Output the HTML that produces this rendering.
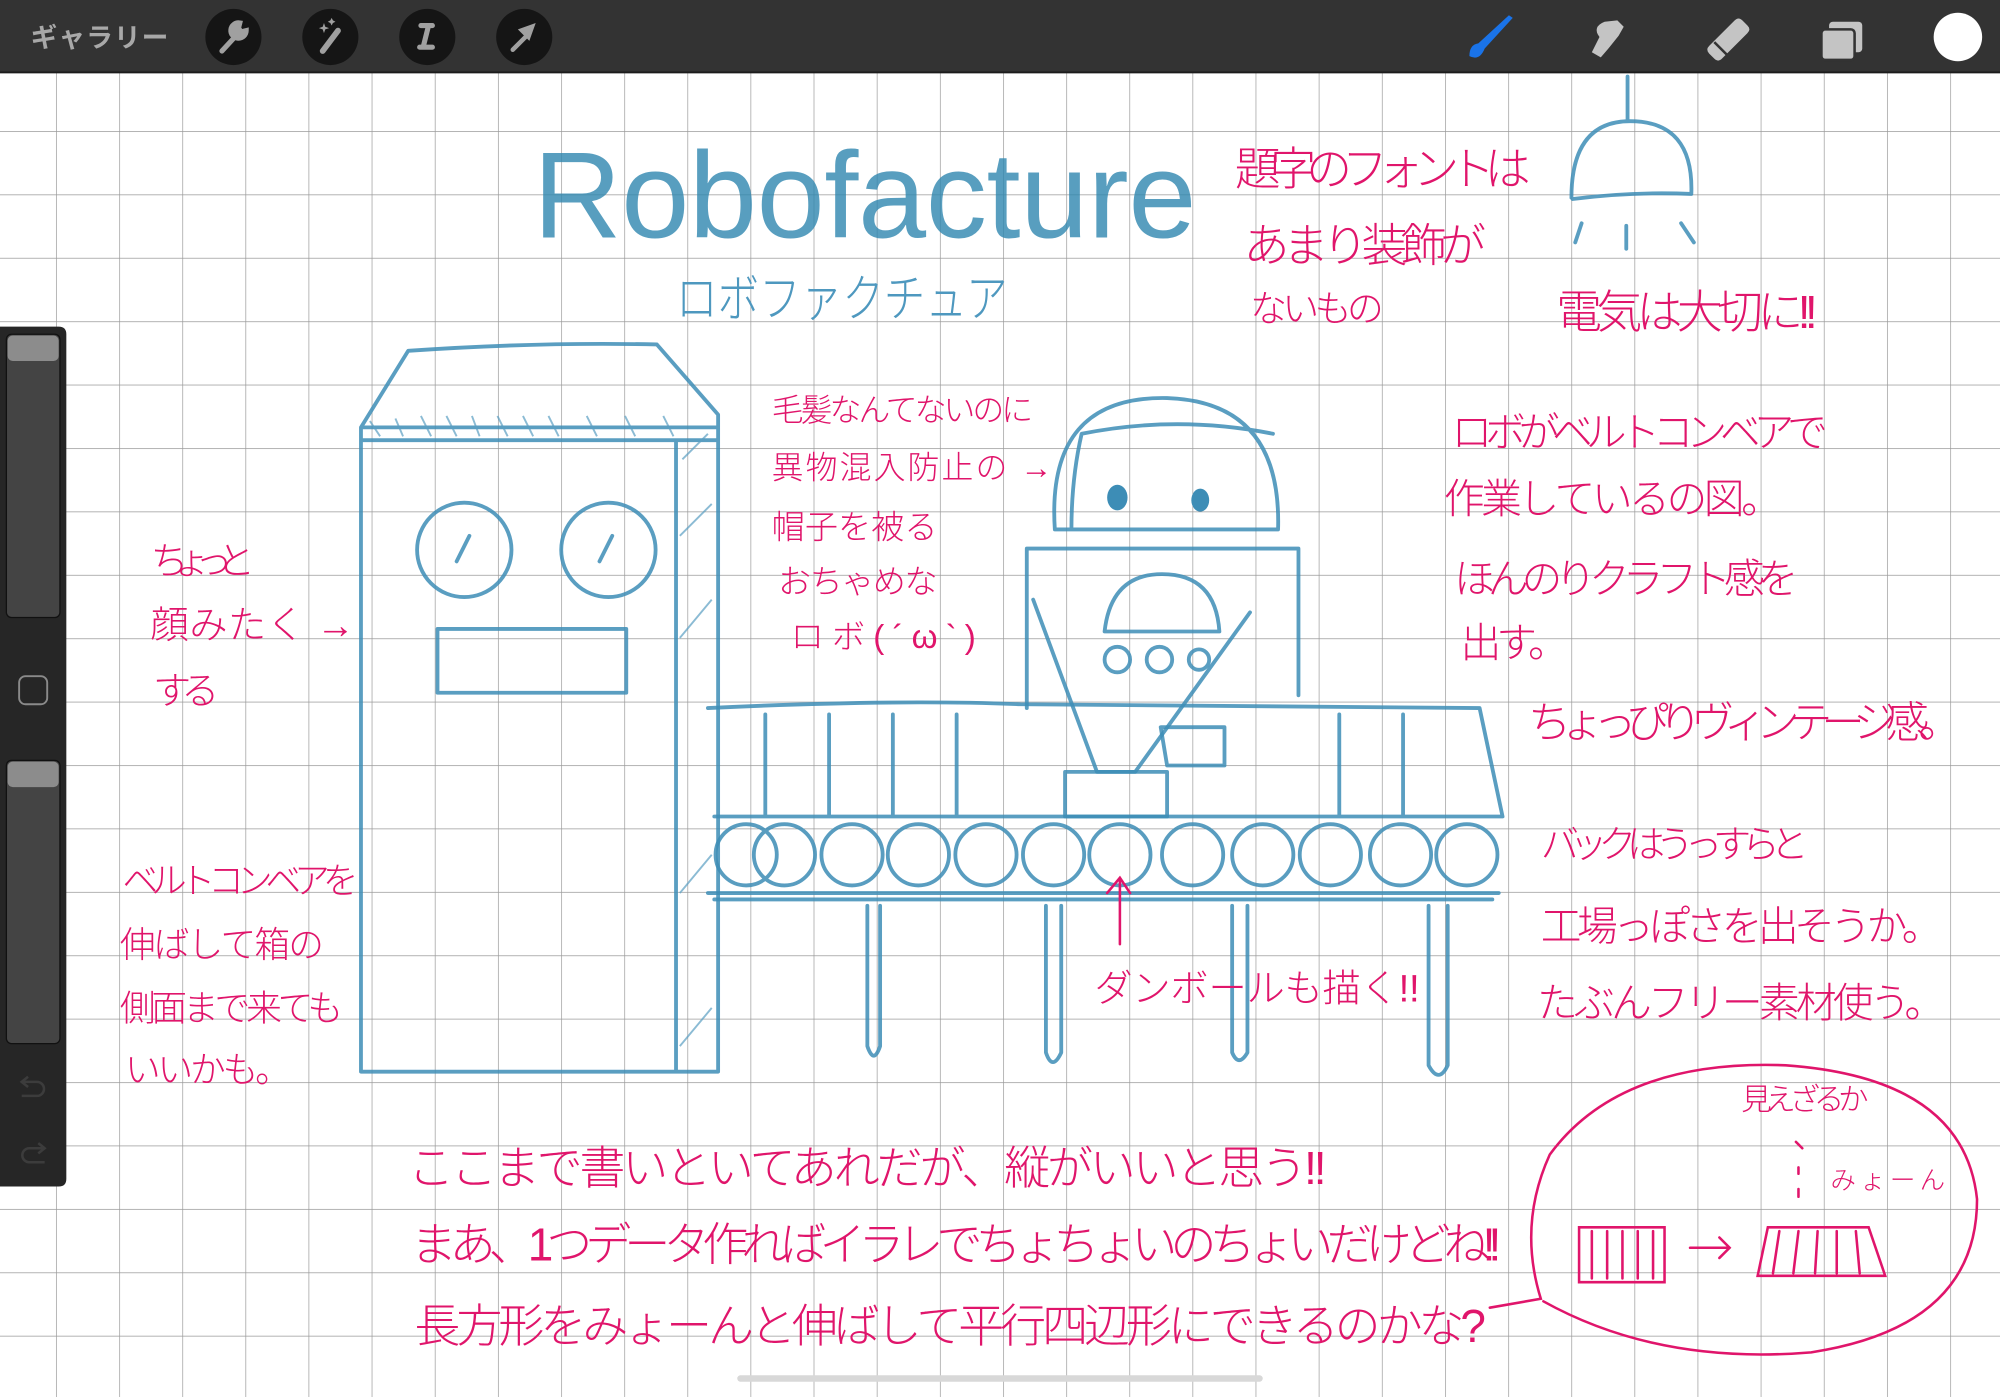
<!DOCTYPE html>
<html><head><meta charset="utf-8"><style>
html,body{margin:0;padding:0;width:2000px;height:1397px;overflow:hidden;background:#fff}
svg{display:block}
.p{fill:#e0156b;font-family:"Liberation Sans","Noto Sans CJK JP",sans-serif;font-weight:200}
.b{fill:none;stroke:#3d8db6;stroke-width:3;stroke-linecap:round;stroke-linejoin:round;opacity:.85}
.bt{fill:none;stroke:#5a9ec2;stroke-width:1.5;opacity:.7}
.pk{fill:none;stroke:#e0156b;stroke-width:2;stroke-linecap:round}
</style></head><body>
<svg width="2000" height="1397" viewBox="0 0 1568 1095" preserveAspectRatio="none" xmlns="http://www.w3.org/2000/svg">
<defs>
<pattern id="g" x="43.9" y="3.3" width="49.5" height="49.7" patternUnits="userSpaceOnUse">
<path d="M0 0V49.7M0 0H49.5" stroke="#9a9a9a" stroke-width="1.1" fill="none"/>
</pattern>
</defs>
<rect width="1568" height="1095" fill="#fff"/>
<rect y="57" width="1568" height="1038" fill="url(#g)"/>

<!-- top bar -->
<rect width="1568" height="57" fill="#333"/>
<rect y="56" width="1568" height="1.5" fill="#1c1c1c"/>
<text x="24" y="37" font-family="'Liberation Sans','Noto Sans CJK JP',sans-serif" font-size="21" font-weight="bold" fill="#a8a8a8" textLength="108">ギャラリー</text>
<circle cx="183" cy="29" r="22" fill="#151515"/>
<circle cx="259" cy="29" r="22" fill="#151515"/>
<circle cx="335" cy="29" r="22" fill="#151515"/>
<circle cx="411" cy="29" r="22" fill="#151515"/>
<path d="M174 40 L186 27 M188 18 a6 6 0 1 0 5 6 l-4 1 -2 -3z" stroke="#a0a0a0" stroke-width="4" fill="#a0a0a0" stroke-linecap="round"/>
<path d="M253 40 L265 24" stroke="#a0a0a0" stroke-width="4.5" stroke-linecap="round"/>
<path d="M254 18l1 3 3 1-3 1-1 3-1-3-3-1 3-1z M260 14l1 2 2 1-2 1-1 2-1-2-2-1 2-1z" fill="#a0a0a0"/>
<path d="M330 20h9 M336 20l-4 16 M329 37h10" stroke="#a0a0a0" stroke-width="4" stroke-linecap="round" fill="none"/>
<path d="M402 39 L414 27" stroke="#a0a0a0" stroke-width="3.5" stroke-linecap="round"/>
<path d="M420 18 L406 23 L415 32z" fill="#a0a0a0"/>
<path d="M1152 44 q8 4 12 -6 l22 -24 -3 -2 -24 22 q-7 1 -7 10z" fill="#1a73e8"/>
<path d="M1248 41 l6 -12 q-6 -8 4 -12 l10 -1 l5 5 -4 7 -8 10 -6 7z" fill="#c4c4c4"/>
<path d="M1340 36 l20 -20 q3 -3 6 0 l4 4 q3 3 0 6 l-20 20 q-3 3 -6 0 l-4 -4 q-3 -3 0 -6z" fill="#c4c4c4"/>
<path d="M1344 33 l10 10" stroke="#333" stroke-width="2"/>
<rect x="1434" y="17" width="26" height="24" rx="3" fill="#c4c4c4"/>
<rect x="1428" y="23" width="26" height="24" rx="3" fill="#c4c4c4" stroke="#333" stroke-width="2"/>
<circle cx="1535" cy="29" r="19" fill="#fff"/>

<!-- sidebar -->
<path d="M0 256 H46 q6 0 6 6 V924 q0 6 -6 6 H0z" fill="#262626"/>
<rect x="5" y="262" width="42" height="222" rx="4" fill="#444" stroke="#111" stroke-width="1"/>
<rect x="6" y="263" width="40" height="20" rx="4" fill="#8c8c8c"/>
<rect x="15" y="530" width="22" height="22" rx="5" fill="none" stroke="#8a8a8a" stroke-width="1.5"/>
<rect x="5" y="596" width="42" height="222" rx="4" fill="#444" stroke="#111" stroke-width="1"/>
<rect x="6" y="597" width="40" height="20" rx="4" fill="#8c8c8c"/>
<path d="M17 848 h12 a5 5 0 0 1 0 11 h-12 M22 844 l-5 4 5 4" stroke="#3c3c3c" stroke-width="2" fill="none"/>
<path d="M35 900 h-12 a5 5 0 0 0 0 11 h12 M30 896 l5 4 -5 4" stroke="#3c3c3c" stroke-width="2" fill="none"/>

<!-- title -->
<text x="418" y="186" font-family="'Liberation Sans',sans-serif" font-size="96" fill="#2f87b0" opacity=".8" textLength="520" lengthAdjust="spacing">Robofacture</text>
<text x="530" y="248" font-family="'Liberation Sans','Noto Sans CJK JP',sans-serif" font-size="40" font-weight="300" fill="#4e98bf" textLength="260" lengthAdjust="spacingAndGlyphs">ロボファクチュア</text>

<!-- lamp -->
<path class="b" d="M1276 60 V95 M1232 155 Q1232 95 1278 95 Q1328 95 1326 152 Q1280 150 1233 156 M1235 190 l5 -15 M1275 195 v-18 M1318 175 l10 15"/>

<!-- left machine -->
<path class="b" d="M283 335 L320 275 Q420 268 515 270 L563 325 L563 840 L283 840z M283 335 H563 M283 345 H563 M530 345 V840"/>
<path class="bt" d="M290 330 l8 12 M310 328 l6 14 M330 326 l8 16 M350 326 l8 16 M370 326 l6 16 M390 326 l8 16 M410 326 l8 16 M430 326 l8 16 M460 326 l8 16 M490 326 l8 16 M520 326 l8 16 M535 360 l20 -20 M533 420 l25 -25 M533 500 l25 -30 M533 700 l25 -30 M533 820 l25 -30"/>
<circle class="b" cx="364" cy="431" r="37"/><circle class="b" cx="477" cy="431" r="37"/>
<path class="b" d="M358 440 l10 -20 M470 440 l10 -20 M343 493 H491 V543 H343z"/>

<!-- robot -->
<path class="b" d="M827 415 Q820 310 915 312 Q1005 315 1002 415z M840 415 q0 -40 8 -75 q75 -15 150 0"/>
<ellipse cx="876" cy="390" rx="8" ry="10" fill="#3d8db6"/>
<ellipse cx="941" cy="392" rx="7" ry="9" fill="#3d8db6"/>
<path class="b" d="M805 430 H1018 V545 M805 430 V555 M810 470 l50 135 h30 l90 -125 M866 495 q5 -45 45 -45 q42 0 45 45z"/>
<circle class="b" cx="876" cy="517" r="10"/><circle class="b" cx="909" cy="517" r="10"/><circle class="b" cx="940" cy="517" r="8"/>
<path class="b" d="M835 605 H915 V640 H835z M910 570 h50 v30 h-45z"/>

<!-- conveyor -->
<path class="b" d="M555 555 Q700 548 800 552 L1160 555 L1178 640 H560 M600 560 V640 M650 560 V640 M700 560 V640 M750 560 V640 M1050 560 V640 M1100 560 V640 M555 700 H1175 M560 705 H1170"/>
<g class="b">
<circle cx="585" cy="670" r="24"/><circle cx="615" cy="670" r="24"/><circle cx="668" cy="670" r="24"/><circle cx="720" cy="670" r="24"/><circle cx="773" cy="670" r="24"/><circle cx="826" cy="670" r="24"/><circle cx="878" cy="670" r="24"/><circle cx="935" cy="670" r="24"/><circle cx="990" cy="670" r="24"/><circle cx="1043" cy="670" r="24"/><circle cx="1098" cy="670" r="24"/><circle cx="1150" cy="670" r="24"/>
</g>
<path class="b" d="M680 710 V820 q5 15 10 0 V710 M820 710 V825 q5 15 12 0 V710 M966 710 V825 q5 12 12 0 V710 M1120 710 V835 q8 15 15 0 V710"/>
<path class="pk" d="M878 740 V690 M868 700 l10 -12 8 12"/>

<!-- pink notes -->
<g class="p">
<text x="968" y="145" font-size="36" textLength="232">題字のフォントは</text>
<text x="975" y="205" font-size="36" textLength="190">あまり装飾が</text>
<text x="980" y="252" font-size="29" textLength="105">ないもの</text>
<text x="1220" y="257" font-size="36" textLength="205">電気は大切に!!</text>
<text x="605" y="330" font-size="25" textLength="205">毛髪なんてないのに</text>
<text x="605" y="375" font-size="25" textLength="220">異物混入防止の →</text>
<text x="605" y="422" font-size="26" textLength="130">帽子を被る</text>
<text x="610" y="465" font-size="26" textLength="125">おちゃめな</text>
<text x="620" y="508" font-size="26" textLength="145">ロボ(´ω`)</text>
<text x="118" y="450" font-size="30" textLength="82">ちょっと</text>
<text x="118" y="500" font-size="30" textLength="160">顔みたく →</text>
<text x="120" y="552" font-size="30" textLength="52">する</text>
<text x="1138" y="350" font-size="32" textLength="295">ロボがベルトコンベアで</text>
<text x="1132" y="402" font-size="32" textLength="265">作業しているの図。</text>
<text x="1140" y="465" font-size="32" textLength="270">ほんのりクラフト感を</text>
<text x="1145" y="515" font-size="32" textLength="85">出す。</text>
<text x="1198" y="578" font-size="34" textLength="340">ちょっぴりヴィンテージ感。</text>
<text x="1208" y="672" font-size="30" textLength="210">バックはうっすらと</text>
<text x="1208" y="737" font-size="32" textLength="315">工場っぽさを出そうか。</text>
<text x="1205" y="797" font-size="32" textLength="320">たぶんフリー素材使う。</text>
<text x="96" y="700" font-size="28" textLength="185">ベルトコンベアを</text>
<text x="94" y="750" font-size="28" textLength="160">伸ばして箱の</text>
<text x="94" y="800" font-size="28" textLength="175">側面まで来ても</text>
<text x="98" y="848" font-size="28" textLength="130">いいかも。</text>
<text x="858" y="785" font-size="30" textLength="255">ダンボールも描く!!</text>
<text x="320" y="928" font-size="36" textLength="720">ここまで書いといてあれだが、縦がいいと思う!!</text>
<text x="322" y="988" font-size="36" textLength="855">まあ、1つデータ作ればイラレでちょちょいのちょいだけどね!!</text>
<text x="325" y="1052" font-size="36" textLength="840">長方形をみょーんと伸ばして平行四辺形にできるのかな?</text>
<text x="1365" y="870" font-size="24" textLength="100">見えざるか</text>
<text x="1435" y="932" font-size="20" textLength="90">みょーん</text>
</g>
<path class="pk" d="M1168 1025 L1208 1018 Q1190 960 1215 905 Q1270 830 1400 835 Q1540 845 1550 940 Q1550 1040 1420 1060 Q1300 1070 1210 1020"/>
<path class="pk" d="M1238 962 H1305 V1005 H1238z M1248 965 V1002 M1260 965 V1002 M1272 965 V1002 M1284 965 V1002 M1296 965 V1002 M1325 978 H1356 M1348 970 l8 8 -8 8 M1378 1000 L1386 962 H1465 L1478 1000z M1395 965 l-5 33 M1410 965 l-4 33 M1425 965 l-2 33 M1440 965 v33 M1455 965 l3 33 M1408 895 l5 5 M1410 915 v5 M1410 932 v6"/>

<!-- home indicator -->
<rect x="578" y="1078" width="412" height="5" rx="2.5" fill="#d8d8d8"/>
</svg>
</body></html>
